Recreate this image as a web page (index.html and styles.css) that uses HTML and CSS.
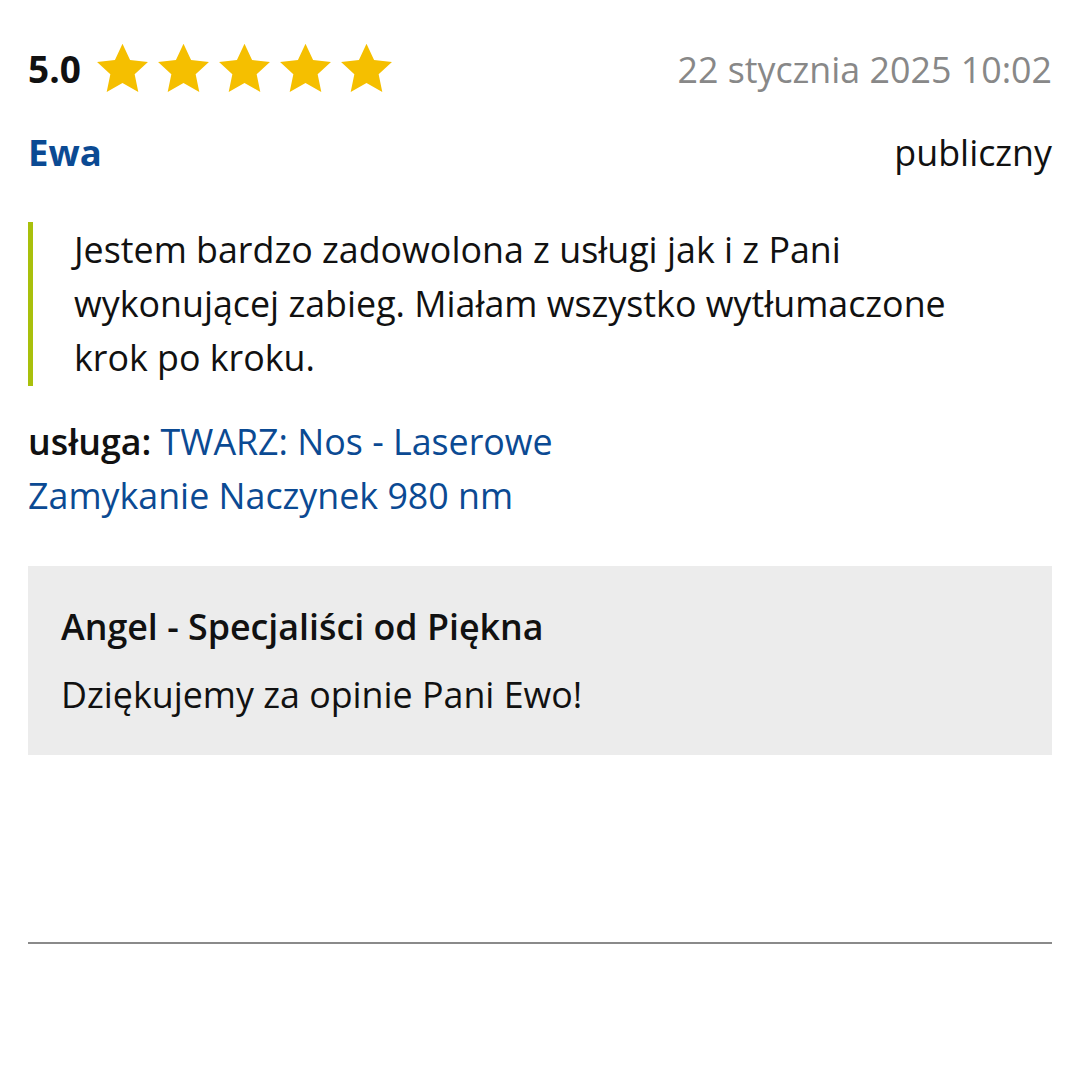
FILE: index.html
```html
<!DOCTYPE html>
<html lang="pl">
<head>
<meta charset="utf-8">
<link rel="stylesheet" href="styles.css">
</head>
<body>
<div class="review">
  <div class="row top">
    <div class="rating">
      <span class="score">5.0</span>
      <span class="stars">
        <svg class="star" viewBox="0 0 24 24"><path d="M12 1.2l3.3 7.1 7.8.9-5.8 5.3 1.6 7.7L12 18.3l-6.9 3.9 1.6-7.7L.9 9.2l7.8-.9z"/></svg>
        <svg class="star" viewBox="0 0 24 24"><path d="M12 1.2l3.3 7.1 7.8.9-5.8 5.3 1.6 7.7L12 18.3l-6.9 3.9 1.6-7.7L.9 9.2l7.8-.9z"/></svg>
        <svg class="star" viewBox="0 0 24 24"><path d="M12 1.2l3.3 7.1 7.8.9-5.8 5.3 1.6 7.7L12 18.3l-6.9 3.9 1.6-7.7L.9 9.2l7.8-.9z"/></svg>
        <svg class="star" viewBox="0 0 24 24"><path d="M12 1.2l3.3 7.1 7.8.9-5.8 5.3 1.6 7.7L12 18.3l-6.9 3.9 1.6-7.7L.9 9.2l7.8-.9z"/></svg>
        <svg class="star" viewBox="0 0 24 24"><path d="M12 1.2l3.3 7.1 7.8.9-5.8 5.3 1.6 7.7L12 18.3l-6.9 3.9 1.6-7.7L.9 9.2l7.8-.9z"/></svg>
      </span>
    </div>
    <span class="date">22 stycznia 2025 10:02</span>
  </div>
  <div class="row author">
    <span class="name">Ewa</span>
    <span class="visibility">publiczny</span>
  </div>
  <blockquote class="quote">Jestem bardzo zadowolona z usługi jak i z Pani wykonującej zabieg. Miałam wszystko wytłumaczone krok po kroku.</blockquote>
  <p class="service"><b class="label">usługa:</b> <a class="link">TWARZ: Nos - Laserowe Zamykanie Naczynek 980 nm</a></p>
  <div class="reply">
    <div class="reply-title">Angel - Specjaliści od Piękna</div>
    <div class="reply-text">Dziękujemy za opinie Pani Ewo!</div>
  </div>
  <hr class="divider">
</div>
</body>
</html>
```
FILE: styles.css
```css
html, body {
  margin: 0;
  padding: 0;
  background: #fff;
}
body {
  font-family: "Open Sans", "Noto Sans", sans-serif;
  color: #111;
  font-size: 35.8px;
  line-height: 54px;
}
.review {
  padding: 41px 28px 0 28px;
}
.row {
  display: flex;
  justify-content: space-between;
  align-items: center;
}
.rating {
  display: flex;
  align-items: center;
}
.score {
  font-weight: 700;
  font-size: 37px;
  margin-right: 14px;
}
.stars {
  display: flex;
  gap: 6px;
}
.star {
  width: 55px;
  height: 55px;
  fill: #f5bf00;
  display: block;
}
.date {
  color: #888;
}
.author {
  margin-top: 29px;
}
.name {
  font-weight: 700;
  font-size: 36.5px;
  color: #0b4a93;
}
.quote {
  margin: 43px 0 0 0;
  border-left: 5px solid #a9c00c;
  padding: 0 60px 2px 41px;
}
.service {
  margin: 28px 0 0 0;
  max-width: 680px;
}
.label {
  font-weight: 600;
}
.link {
  color: #0b4a93;
}
.reply {
  margin-top: 44px;
  background: #ececec;
  padding: 33px 33px 34px 33px;
}
.reply-title {
  font-weight: 600;
  margin-bottom: 14px;
}
.divider {
  margin: 187px 0 0 0;
  border: none;
  height: 2px;
  background: #8a8a8a;
}
```
